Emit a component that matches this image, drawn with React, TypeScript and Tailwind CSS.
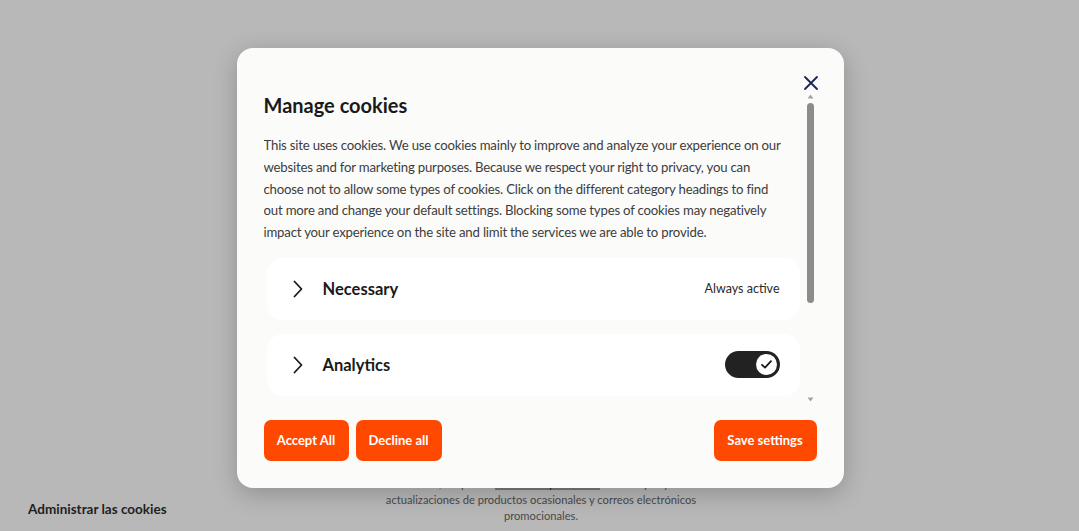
import React from "react";

function Chevron() {
  return (
    <svg width="12" height="18" viewBox="0 0 12 18" fill="none" className="shrink-0">
      <path d="M2.5 1.5 L9.5 9 L2.5 16.5" stroke="#1a1a1a" strokeWidth="1.8" strokeLinecap="round" strokeLinejoin="round" />
    </svg>
  );
}

function Toggle() {
  return (
    <div className="w-[55px] h-[27px] rounded-full bg-[#222222] flex items-center justify-end pr-[3px]">
      <div className="w-[21px] h-[21px] rounded-full bg-white flex items-center justify-center">
        <svg width="13" height="13" viewBox="0 0 13 13" fill="none">
          <path d="M2 6.8 L5 9.6 L11 3.2" stroke="#1a1a1a" strokeWidth="1.8" strokeLinecap="round" strokeLinejoin="round" />
        </svg>
      </div>
    </div>
  );
}

function Card({ label, right }: { label: string; right: React.ReactNode }) {
  return (
    <div className="mx-[3px] h-[62px] rounded-[16px] bg-white flex items-center pl-[25px] pr-[20px] shrink-0">
      <Chevron />
      <span className="ml-[19px] text-[16.5px] font-bold text-[#1a1a1a] flex-1">{label}</span>
      {right}
    </div>
  );
}

export default function App() {
  return (
    <div
      className="relative w-[1079px] h-[531px] bg-[#b8b8b8] overflow-hidden"
      style={{ fontFamily: "Lato, 'Open Sans', sans-serif" }}
    >
      {/* underlying page content */}
      <div className="absolute left-[28px] top-[499px] text-[13.5px] font-bold text-[#1f1f1f]">
        Administrar las cookies
      </div>
      <div className="absolute left-[368px] top-[476px] w-[346px] text-center text-[11.2px] leading-[16px] text-[#4a4a4a]">
        Al continuar, aceptas la <span className="bg-[#7a7a7a] text-[#222]">Política de privacidad</span> de HubSpot y recibir actualizaciones de productos ocasionales y correos electrónicos promocionales.
      </div>

      {/* modal overlay */}
      <div className="absolute inset-0 flex items-start justify-center pt-[48px] pl-[1px]">
        <div className="w-[607px] h-[440px] rounded-[16px] bg-[#fbfbfa] shadow-[0_6px_24px_rgba(0,0,0,0.22)] flex flex-col pl-[27px] pr-[26px] pt-[27px] pb-[27px]">
          <div className="flex justify-end h-[18px]">
            <svg width="16" height="16" viewBox="0 0 16 16" fill="none" className="mr-[-1px]">
              <path d="M2 2 L14 14 M14 2 L2 14" stroke="#1b2456" strokeWidth="1.8" strokeLinecap="round" />
            </svg>
          </div>
          <div className="flex h-[312px]">
            <div className="flex-1 overflow-hidden flex flex-col">
              <h2 className="text-[20px] font-bold text-[#1a1a1a] leading-[24px]">Manage cookies</h2>
              <p className="mt-[18px] text-[13.2px] tracking-[-0.2px] leading-[21.8px] text-[#3d3d3d] pr-[15px]">
                This site uses cookies. We use cookies mainly to improve and analyze your experience on our websites and for marketing purposes. Because we respect your right to privacy, you can choose not to allow some types of cookies. Click on the different category headings to find out more and change your default settings. Blocking some types of cookies may negatively impact your experience on the site and limit the services we are able to provide.
              </p>
              <div className="mt-[14px] flex flex-col gap-[14px]">
                <Card label="Necessary" right={<span className="text-[12.5px] text-[#2a2a2a]">Always active</span>} />
                <Card label="Analytics" right={<Toggle />} />
              </div>
            </div>
            {/* scrollbar */}
            <div className="w-[15px] flex flex-col items-center">
              <svg width="7" height="5" viewBox="0 0 7 5" className="mt-[1px]"><path d="M3.5 0.5 L6.5 4.5 L0.5 4.5 Z" fill="#a3a3a3" /></svg>
              <div className="mt-[4px] w-[7px] h-[200px] rounded-full bg-[#8c8c8c]" />
              <div className="flex-1" />
              <svg width="7" height="5" viewBox="0 0 7 5" className="mb-[3px]"><path d="M0.5 0.5 L6.5 0.5 L3.5 4.5 Z" fill="#a3a3a3" /></svg>
            </div>
          </div>
          <div className="flex items-center mt-[15px] pr-[1px]">
            <button className="h-[41px] w-[85px] rounded-[7px] bg-[#ff4800] text-white text-[13px] font-bold">Accept All</button>
            <button className="ml-[7px] h-[41px] w-[86px] rounded-[7px] bg-[#ff4800] text-white text-[13px] font-bold">Decline all</button>
            <div className="flex-1" />
            <button className="h-[41px] w-[103px] rounded-[7px] bg-[#ff4800] text-white text-[13px] font-bold">Save settings</button>
          </div>
        </div>
      </div>
    </div>
  );
}
